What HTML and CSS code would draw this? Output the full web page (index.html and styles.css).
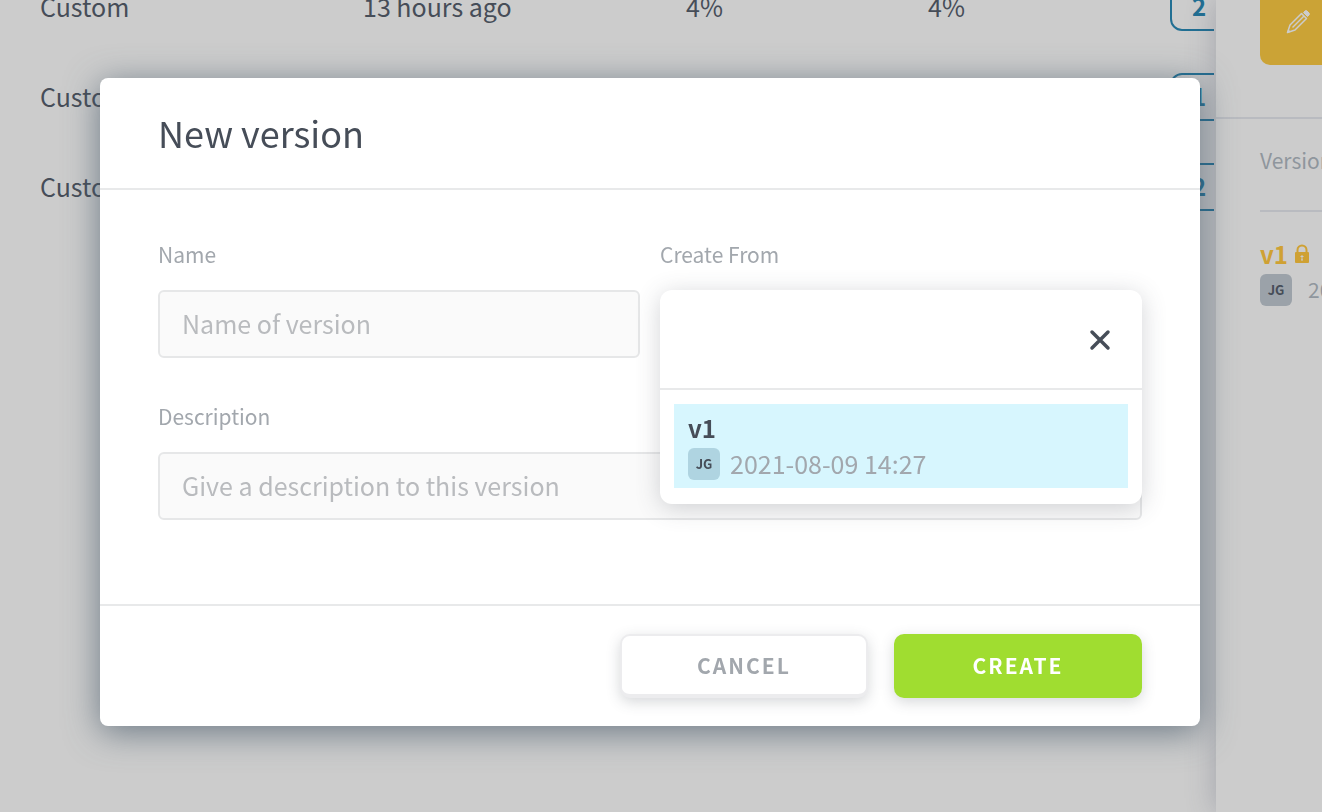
FILE: index.html
```html
<!DOCTYPE html>
<html lang="en">
<head>
<meta charset="utf-8">
<title>New version</title>
<link rel="stylesheet" href="styles.css">
</head>
<body>
<div class="app">
  <main class="content">
    <table class="models">
      <tbody>
        <tr>
          <td class="wide">Custom</td><td class="wide">13 hours ago</td><td>4%</td><td>4%</td>
          <td class="last"><button class="count" type="button">2</button></td>
        </tr>
        <tr>
          <td class="wide">Custom</td><td></td><td></td><td></td>
          <td class="last"><button class="count" type="button">1</button></td>
        </tr>
        <tr>
          <td class="wide">Custom</td><td></td><td></td><td></td>
          <td class="last"><button class="count" type="button">2</button></td>
        </tr>
      </tbody>
    </table>
  </main>
  <aside class="panel">
    <div class="panel-top">
      <button class="edit" type="button" aria-label="Edit">
        <svg width="26" height="26" viewBox="0 0 26 26" fill="none" stroke="currentColor" stroke-width="2" stroke-linejoin="round">
          <path d="M2.500 23.500l2.500-7.500L16.500 4.500l5 5L10 21z" stroke-width="1.500"/>
          <path d="M7.500 18.500l11.500-11.500" stroke-width="1.500"/>
          <path d="M1.800 24.200l1.500-4 2.500 2.500z" fill="currentColor" stroke="none"/>
          <path d="M18.500 3.500l1.500-1.500q1-.8 2 0l2 2q.8 1 0 2l-1.500 1.500z" fill="currentColor" stroke-width="1"/>
        </svg>
      </button>
    </div>
    <div class="panel-body">
      <h2 class="panel-title">Versions</h2>
      <div class="version">
        <div class="version-name">v1
          <svg width="16" height="20" viewBox="0 0 16 20">
            <path d="M3.500 9V6a4.500 4.500 0 0 1 9 0v3" fill="none" stroke="currentColor" stroke-width="2"/>
            <rect x="1" y="8" width="14" height="11" rx="1" fill="currentColor"/>
            <path d="M8 11v5M6.500 12.500h3M7 16h2" stroke="#ccc" stroke-width="1"/>
          </svg>
        </div>
        <div class="meta"><span class="avatar">JG</span><time class="panel-date">2021-08-09 14:27</time></div>
      </div>
    </div>
  </aside>
</div>

<div class="overlay">
  <form class="dialog" role="dialog" aria-labelledby="dialog-title">
    <header class="dialog-header"><h1 class="dialog-title" id="dialog-title">New version</h1></header>
    <div class="dialog-body">
      <div class="field">
        <label for="name">Name</label>
        <input id="name" type="text" placeholder="Name of version">
      </div>
      <div class="field">
        <label for="source">Create From</label>
        <div class="picker">
          <div class="dropdown">
            <div class="dropdown-head">
              <input class="search" id="source" type="text">
              <button class="close" type="button" aria-label="Close">
                <svg width="24" height="24" viewBox="0 0 24 24" stroke="currentColor" stroke-width="3.500" stroke-linecap="round"><path d="M4 4l16 16M20 4L4 20"/></svg>
              </button>
            </div>
            <div class="options" role="listbox">
              <div class="option" role="option" aria-selected="true">
                <div class="option-name">v1</div>
                <div class="meta"><span class="avatar">JG</span><time>2021-08-09 14:27</time></div>
              </div>
            </div>
          </div>
        </div>
      </div>
      <div class="field full">
        <label for="description">Description</label>
        <input id="description" type="text" placeholder="Give a description to this version">
      </div>
    </div>
    <footer class="dialog-footer">
      <button class="btn cancel" type="button">CANCEL</button>
      <button class="btn create" type="submit">CREATE</button>
    </footer>
  </form>
</div>
</body>
</html>
```

FILE: styles.css
```css
* { box-sizing: border-box; }

body {
  margin: 0;
  overflow: hidden;
  background: #ccc;
  color: #464d58;
  font: 25px/36px "Noto Sans CJK SC", "Open Sans", sans-serif;
}

button, input { font: inherit; color: inherit; }
button { padding: 0; cursor: pointer; }
svg { display: block; }

/* Page behind the dialog */
.app { display: flex; height: 100vh; }
.content { flex: 1; min-width: 0; overflow: hidden; }

.models {
  width: 100%;
  margin: -38px 0 0 40px;
  border-collapse: collapse;
  table-layout: fixed;
}
.models tr { height: 90px; }
.models td { padding: 0 0 2px; white-space: nowrap; }
.models .wide { width: 323px; }
.models td:nth-child(3), .models td:nth-child(4) { width: 242px; }
.models .last { width: auto; padding: 0; }
.count {
  display: block;
  width: 100px;
  height: 48px;
  padding: 0 0 2px 20px;
  border: 2px solid #216f93;
  border-radius: 12px;
  background: none;
  color: #216f93;
  font-size: 24px;
  font-weight: 700;
  text-align: left;
}

.panel {
  width: 106px;
  margin-left: 2px;
  overflow: hidden;
  background: #ccc;
  box-shadow: 0 0 28px rgba(70, 77, 100, 0.32);
  white-space: nowrap;
}
.panel-top {
  display: flex;
  align-items: flex-start;
  height: 119px;
  padding-left: 44px;
  border-bottom: 2px solid #b9bbc0;
}
.edit {
  display: flex;
  flex: none;
  align-items: center;
  width: 160px;
  height: 86px;
  margin-top: -21px;
  padding-left: 25px;
  border: 0;
  border-radius: 10px;
  background: #cba336;
  color: #ccc;
}
.panel-body { padding-left: 44px; }
.panel-title {
  margin: 0;
  padding: 23px 0 32px;
  border-bottom: 2px solid #b9bbc0;
  color: #8f969d;
  font-size: 21px;
  font-weight: 400;
}
.version { padding-top: 24px; }
.version-name {
  display: flex;
  align-items: center;
  gap: 6px;
  color: #cfa133;
  font-size: 24px;
  font-weight: 700;
}
.version .meta { color: #8f969d; font-size: 21px; }
.panel-date { margin-left: 6px; }

.meta { display: flex; align-items: center; gap: 10px; color: #a2a7ad; }
.meta time { padding-bottom: 2px; line-height: 34px; }
.avatar {
  display: grid;
  flex: none;
  place-items: center;
  width: 32px;
  height: 32px;
  border-radius: 6px;
  background: #9ba2a9;
  color: #464d58;
  font-size: 13px;
  font-weight: 700;
  line-height: 32px;
}

/* Dialog */
.overlay {
  position: fixed;
  inset: 0;
  padding: 78px 122px 0 100px;
}
.dialog {
  border-radius: 8px;
  background: #fff;
  box-shadow: 0 6px 34px rgba(70, 89, 106, 0.72);
}
.dialog-header {
  padding: 26px 58px 28px;
  border-bottom: 2px solid #e8e9ea;
}
.dialog-title { margin: 0; font-size: 36px; font-weight: 400; line-height: 56px; }
.dialog-body {
  display: grid;
  grid-template-columns: 1fr 1fr;
  gap: 42px 20px;
  padding: 48px 58px 84px;
}
.field { display: flex; flex-direction: column; gap: 20px; min-width: 0; }
.full { grid-column: 1 / -1; }
label { color: #a2a7ad; font-size: 21px; line-height: 32px; }
.field input {
  width: 100%;
  height: 68px;
  padding: 0 22px 2px;
  border: 2px solid #e6e7e8;
  border-radius: 6px;
  background: #fafafa;
  outline: 0;
}
input::placeholder { color: #b9bbbe; opacity: 1; }

.picker { position: relative; height: 68px; }
.dropdown {
  position: absolute;
  top: 0;
  left: 0;
  width: 100%;
  border-radius: 12px;
  background: #fff;
  box-shadow: 0 4px 24px rgba(70, 77, 88, 0.24);
}
.dropdown-head {
  display: flex;
  align-items: center;
  height: 100px;
  padding: 2px 30px 0 0;
  border-bottom: 2px solid #e8e9ea;
}
.field .search { flex: 1; min-width: 0; border: 0; background: none; }
.close { border: 0; background: none; color: #464d58; }
.options { padding: 14px 14px 16px; }
.option { padding: 6px 14px; background: #d7f6fe; }
.option-name { font-size: 24px; font-weight: 700; }
.option .avatar { background: #afd4e1; }

.dialog-footer {
  display: flex;
  justify-content: flex-end;
  gap: 26px;
  padding: 28px 58px;
  border-top: 2px solid #e8e9ea;
}
.btn {
  width: 248px;
  height: 64px;
  border: 0;
  border-radius: 10px;
  box-shadow: 0 4px 14px rgba(70, 77, 88, 0.22);
  font-size: 21px;
  font-weight: 700;
  letter-spacing: 2px;
}
.cancel {
  border: 2px solid #ececee;
  border-bottom-width: 4px;
  background: #fff;
  color: #a2a7ad;
}
.create { padding-bottom: 2px; background: #a0dd30; color: #fff; }
```
